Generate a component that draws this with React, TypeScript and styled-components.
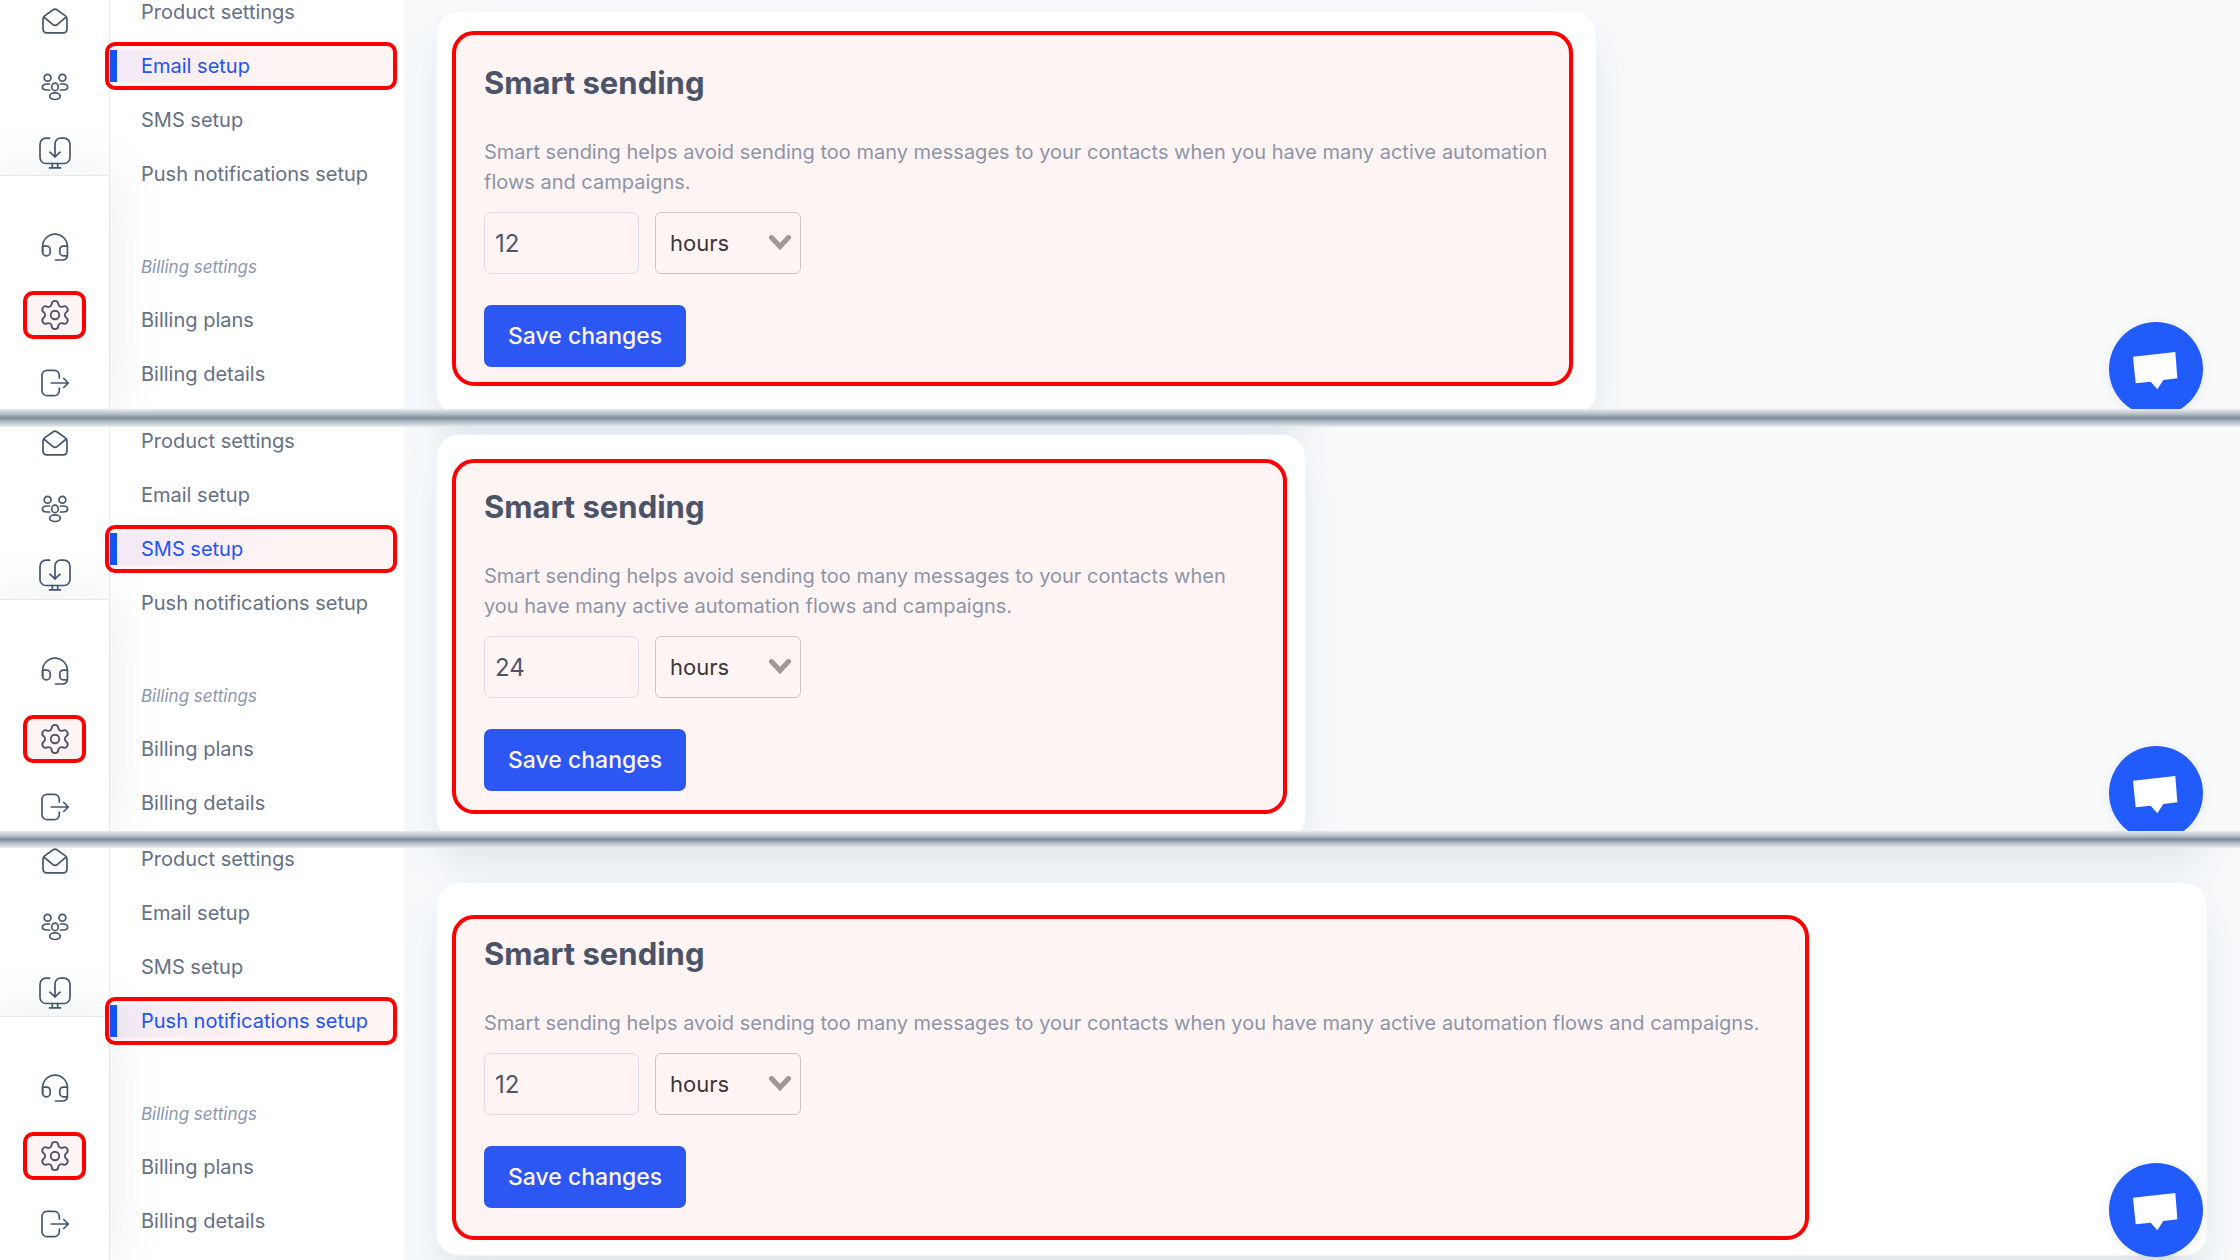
import React from "react";
import styled, { createGlobalStyle, css } from "styled-components";
import { Settings } from "lucide-react";

const GlobalStyle = createGlobalStyle`
  *, *::before, *::after { box-sizing: border-box; }
  body {
    margin: 0;
    background: #f9fafc;
    font-family: Inter, "Noto Sans", "Liberation Sans", sans-serif;
  }
  button, input, select { font: inherit; }
`;

const highlight = css`
  border: 4px solid #ff0000;
  background: rgba(255, 0, 0, 0.043);
`;

const Page = styled.main`
  display: flex;
  flex-direction: column;
  min-height: 100vh;
`;

const Divider = styled.hr<{ $size: number }>`
  position: relative;
  z-index: 5;
  flex: none;
  width: 100%;
  height: ${(p) => p.$size}px;
  margin: 0;
  border: 0;
  background: linear-gradient(#e9edf0, #b5bec6 28%, #7e8c99 50%, #b5bec6 72%, #e9edf0);
`;

const Panel = styled.section`
  position: relative;
  display: grid;
  grid-template-columns: 110px 294px minmax(0, 1fr);
  overflow: hidden;
`;

const Rail = styled.nav`
  position: relative;
  z-index: 1;
  display: flex;
  flex-direction: column;
  border-right: 1px solid #e9eef4;
  background: #ffffff;
`;

const RailTop = styled.div<{ $top: number; $bottom: number }>`
  display: flex;
  flex-direction: column;
  align-items: center;
  gap: 40px;
  padding: ${(p) => p.$top}px 0 ${(p) => p.$bottom}px;
`;

const RailBottom = styled.div`
  flex: 1;
  display: flex;
  flex-direction: column;
  align-items: center;
  gap: 42px;
  padding: 58px 0 0;
  border-top: 1px solid #e6ebf0;
  background: #ffffff;
  box-shadow: 0 0 60px rgba(70, 100, 130, 0.12);
`;

const RailLink = styled.a<{ $marked?: boolean }>`
  position: relative;
  display: flex;
  align-items: center;
  justify-content: center;
  width: 63px;
  height: 26px;
  color: #45566e;

  svg {
    flex: none;
  }

  ${(p) =>
    p.$marked &&
    css`
      &::after {
        content: "";
        position: absolute;
        inset: -11px 0;
        border-radius: 10px;
        ${highlight}
      }
    `}
`;

const Menu = styled.nav<{ $top: number }>`
  padding: ${(p) => p.$top}px 0 18px;
  background: #ffffff;
`;

const MenuList = styled.ul`
  display: flex;
  flex-direction: column;
  gap: 34px;
  margin: 0;
  padding: 0;
  list-style: none;
`;

const MenuHeading = styled.h3`
  margin: 73px 0 33px;
  padding-left: 31px;
  color: #8c97ae;
  font-size: 17px;
  font-style: italic;
  font-weight: 400;
  line-height: 20px;
`;

const MenuLink = styled.a<{ $active: boolean }>`
  position: relative;
  z-index: 2;
  display: block;
  padding-left: 31px;
  color: ${(p) => (p.$active ? "#1558ff" : "#656f85")};
  font-size: 20px;
  line-height: 20px;
  text-decoration: none;
  white-space: nowrap;

  ${(p) =>
    p.$active &&
    css`
      &::before {
        content: "";
        position: absolute;
        z-index: -1;
        inset: -6px 8px -6px 0;
        border-left: 7px solid #0757ff;
        border-radius: 0 5px 5px 0;
        background: linear-gradient(90deg, rgba(30, 80, 255, 0.06), rgba(30, 80, 255, 0) 60%);
      }
      &::after {
        content: "";
        position: absolute;
        inset: -14px 7px -14px -5px;
        border-radius: 10px;
        ${highlight}
      }
    `}
`;

const Content = styled.div<{ $top: number; $bottom: number }>`
  padding: ${(p) => p.$top}px 33px 0;
  background: linear-gradient(90deg, #f6f9fb, #f9fafc 24px);

  > :last-child {
    margin-bottom: ${(p) => p.$bottom}px;
  }
`;

const cardSurface = css`
  width: 100%;
  border-radius: 22px;
  background: #ffffff;
`;

/* The card scrolled out above the visible one; only its shadow shows. */
const CardAbove = styled.div<{ $max: number; $offset: number }>`
  ${cardSurface}
  max-width: ${(p) => p.$max}px;
  height: 80px;
  margin: ${(p) => -80 - p.$offset}px 0 ${(p) => p.$offset}px;
  box-shadow: 0 20px 40px rgba(60, 95, 125, 0.12);
`;

const Card = styled.article<{ $max: number; $top: number; $bottom: number }>`
  ${cardSurface}
  position: relative;
  max-width: ${(p) => p.$max}px;
  padding: ${(p) => p.$top}px 18px ${(p) => p.$bottom}px 15px;
  box-shadow: 0 0 0 1px #f0f4f8, 0 24px 40px rgba(60, 95, 125, 0.12);
`;

const Form = styled.form<{ $max: number; $top: number; $bottom: number }>`
  max-width: ${(p) => p.$max}px;
  padding: ${(p) => p.$top}px 18px ${(p) => p.$bottom}px 28px;
  border-radius: 22px;
  ${highlight}
`;

const Title = styled.h2`
  margin: 0 0 34px;
  color: #4a5368;
  font-size: 31px;
  font-weight: 700;
  line-height: 40px;
`;

const Description = styled.p`
  margin: 0 0 15px;
  color: #8d94a8;
  font-size: 20px;
  line-height: 30px;
`;

const Fields = styled.div`
  display: flex;
  gap: 16px;
  margin-bottom: 31px;
`;

const NumberInput = styled.input`
  width: 155px;
  height: 62px;
  padding: 0 10px;
  border: 1px solid #dfdce7;
  border-radius: 7px;
  outline: 0;
  background: transparent;
  color: #4d556c;
  font-size: 24px;
`;

const SelectBox = styled.div`
  position: relative;
  width: 146px;

  svg {
    position: absolute;
    top: 23px;
    right: 10px;
    pointer-events: none;
  }
`;

const Select = styled.select`
  width: 100%;
  height: 62px;
  padding: 0 14px;
  border: 1px solid #cbc4c4;
  border-radius: 6px;
  appearance: none;
  background: transparent;
  color: #3d3636;
  font-size: 22px;
`;

const SaveButton = styled.button`
  display: block;
  height: 62px;
  padding: 0 24px;
  border: 0;
  border-radius: 7px;
  background: #2c57f2;
  color: #fff5f8;
  font-size: 23px;
  font-weight: 500;
`;

const ChatButton = styled.button<{ $bottom: number }>`
  position: absolute;
  right: 37px;
  bottom: ${(p) => p.$bottom}px;
  display: flex;
  align-items: center;
  justify-content: center;
  width: 94px;
  height: 94px;
  padding: 0;
  border: 0;
  border-radius: 50%;
  background: #225bfc;
  box-shadow: 0 2px 14px rgba(0, 0, 0, 0.08);
`;

const stroke = {
  fill: "none",
  stroke: "currentColor",
  strokeWidth: 1.7,
  strokeLinecap: "round" as const,
  strokeLinejoin: "round" as const,
  "aria-hidden": true,
};

const MailIcon = () => (
  <svg width="26" height="26" viewBox="0 0 26 26" {...stroke}>
    <path d="M1 11v10.300a3.500 3.500 0 0 0 3.500 3.500h17a3.500 3.500 0 0 0 3.500-3.500V11c0-1.300-.6-2.400-1.600-3.100l-8.600-6.100a3.100 3.100 0 0 0-3.600 0L2.600 7.900C1.600 8.600 1 9.700 1 11z" />
    <path d="M1.800 9l8.800 7.300a3.800 3.800 0 0 0 4.800 0L24.200 9" />
  </svg>
);

const PeopleIcon = () => (
  <svg width="28" height="28" viewBox="-1 -1 28 28" {...stroke}>
    <circle cx="5.600" cy="3.800" r="3.400" />
    <circle cx="20.400" cy="3.800" r="3.400" />
    <ellipse cx="13" cy="12.900" rx="3.300" ry="3.700" />
    <ellipse cx="13" cy="22.200" rx="5.300" ry="3.300" />
    <path d="M7.600 10H4.800C2.200 10 .4 11.300.4 13s1.800 3 4.400 3h2.800M18.400 10h2.800c2.600 0 4.400 1.300 4.400 3s-1.800 3-4.400 3h-2.800" />
  </svg>
);

const InstallIcon = () => (
  <svg width="32" height="32" viewBox="0 0 32 32" {...stroke}>
    <path d="M10.500 1.200H7A6 6 0 0 0 1 7.200v13.300a6 6 0 0 0 6 6h18a6 6 0 0 0 6-6V7.200a6 6 0 0 0-6-6h-3.500a5.500 5.500 0 0 0-5.500 5.500v13" />
    <path d="M10.900 15.200l5.100 4.600 5.100-4.600M13.300 26.500v4.300M18.700 26.500v4.300M10.500 30.900h11" />
  </svg>
);

const HeadsetIcon = () => (
  <svg width="28" height="28" viewBox="0 0 28 28" {...stroke}>
    <path d="M1.600 19v-5.500a12.400 12.400 0 0 1 24.800 0v9a4.500 4.500 0 0 1-4.500 4.500H14.500" />
    <path d="M1.600 13.200h4.200A3.400 3.400 0 0 1 9.200 16.600v2.600a3.600 3.600 0 0 1-3.600 3.600h-.4a3.600 3.600 0 0 1-3.600-3.600zM26.400 13.200h-4.200a3.400 3.400 0 0 0-3.400 3.400v2.600a3.600 3.600 0 0 0 3.600 3.600h4" />
  </svg>
);

const LogoutIcon = () => (
  <svg width="28" height="28" viewBox="0 0 28 28" {...stroke}>
    <path d="M18.300 9V6.300a5 5 0 0 0-5-5H6a5 5 0 0 0-5 5v15.400a5 5 0 0 0 5 5h7.300a5 5 0 0 0 5-5V19" />
    <path d="M10.300 14h17M22.800 9.500l4.500 4.500-4.500 4.500" />
  </svg>
);

const Chevron = () => (
  <svg width="22" height="16" viewBox="0 0 22 16" fill="none" aria-hidden>
    <path d="M2.500 2.500L11 11.500L19.500 2.500" stroke="#a09797" strokeWidth="5" strokeLinecap="round" />
  </svg>
);

const ChatIcon = () => (
  <svg width="46" height="46" viewBox="-69 -69 138 138" aria-hidden>
    <path d="M-69-37L58-51L64 28L22 33L4 61L-16 38L-61 43z" fill="#ffffff" />
  </svg>
);

type PanelData = {
  id: string;
  active: string;
  value: string;
  railTop: number;
  railGap: number;
  menuTop: number;
  contentTop: number;
  contentBottom: number;
  above: boolean;
  cardMax: number;
  cardTop: number;
  cardBottom: number;
  formMax: number;
  formTop: number;
  formBottom: number;
  chatBottom: number;
};

const panels: PanelData[] = [
  {
    id: "email", active: "Email setup", value: "12",
    railTop: 8, railGap: 9, menuTop: 2, contentTop: 11, contentBottom: -5, above: false,
    cardMax: 1159, cardTop: 20, cardBottom: 28,
    formMax: 1121, formTop: 28, formBottom: 15, chatBottom: -7,
  },
  {
    id: "sms", active: "SMS setup", value: "24",
    railTop: 3, railGap: 11, menuTop: 4, contentTop: 8, contentBottom: -8, above: true,
    cardMax: 868, cardTop: 24, cardBottom: 25,
    formMax: 835, formTop: 24, formBottom: 19, chatBottom: -9,
  },
  {
    id: "push", active: "Push notifications setup", value: "12",
    railTop: 0, railGap: 10, menuTop: 1, contentTop: 35, contentBottom: 5, above: true,
    cardMax: 1770, cardTop: 32, cardBottom: 15,
    formMax: 1357, formTop: 15, formBottom: 28, chatBottom: 3,
  },
];

const productLinks = ["Product settings", "Email setup", "SMS setup", "Push notifications setup"];
const billingLinks = ["Billing plans", "Billing details"];

const Links = ({ items, active }: { items: string[]; active: string }) => (
  <MenuList>
    {items.map((item) => (
      <li key={item}>
        <MenuLink href="#" $active={item === active}>{item}</MenuLink>
      </li>
    ))}
  </MenuList>
);

const SettingsPanel = ({ data }: { data: PanelData }) => (
  <Panel>
    <Rail>
      <RailTop $top={data.railTop} $bottom={data.railGap}>
        <RailLink href="#" aria-label="Campaigns"><MailIcon /></RailLink>
        <RailLink href="#" aria-label="Contacts"><PeopleIcon /></RailLink>
        <RailLink href="#" aria-label="Install"><InstallIcon /></RailLink>
      </RailTop>
      <RailBottom>
        <RailLink href="#" aria-label="Support"><HeadsetIcon /></RailLink>
        <RailLink href="#" aria-label="Settings" $marked>
          <Settings size={34} strokeWidth={1.3} />
        </RailLink>
        <RailLink href="#" aria-label="Log out"><LogoutIcon /></RailLink>
      </RailBottom>
    </Rail>
    <Menu $top={data.menuTop}>
      <Links items={productLinks} active={data.active} />
      <MenuHeading>Billing settings</MenuHeading>
      <Links items={billingLinks} active={data.active} />
    </Menu>
    <Content $top={data.contentTop} $bottom={data.contentBottom}>
      {data.above && <CardAbove $max={data.cardMax} $offset={data.contentTop} />}
      <Card $max={data.cardMax} $top={data.cardTop} $bottom={data.cardBottom}>
        <Form $max={data.formMax} $top={data.formTop} $bottom={data.formBottom}>
          <Title>Smart sending</Title>
          <Description>
            Smart sending helps avoid sending too many messages to your contacts when you have many
            active automation flows and campaigns.
          </Description>
          <Fields>
            <NumberInput aria-label="Smart sending period" inputMode="numeric" defaultValue={data.value} />
            <SelectBox>
              <Select aria-label="Period unit" defaultValue="hours">
                <option value="hours">hours</option>
              </Select>
              <Chevron />
            </SelectBox>
          </Fields>
          <SaveButton type="button">Save changes</SaveButton>
        </Form>
      </Card>
    </Content>
    <ChatButton type="button" aria-label="Open chat" $bottom={data.chatBottom}>
      <ChatIcon />
    </ChatButton>
  </Panel>
);

export default function App() {
  return (
    <>
      <GlobalStyle />
      <Page>
        <SettingsPanel data={panels[0]} />
        <Divider $size={18} />
        <SettingsPanel data={panels[1]} />
        <Divider $size={17} />
        <SettingsPanel data={panels[2]} />
      </Page>
    </>
  );
}
